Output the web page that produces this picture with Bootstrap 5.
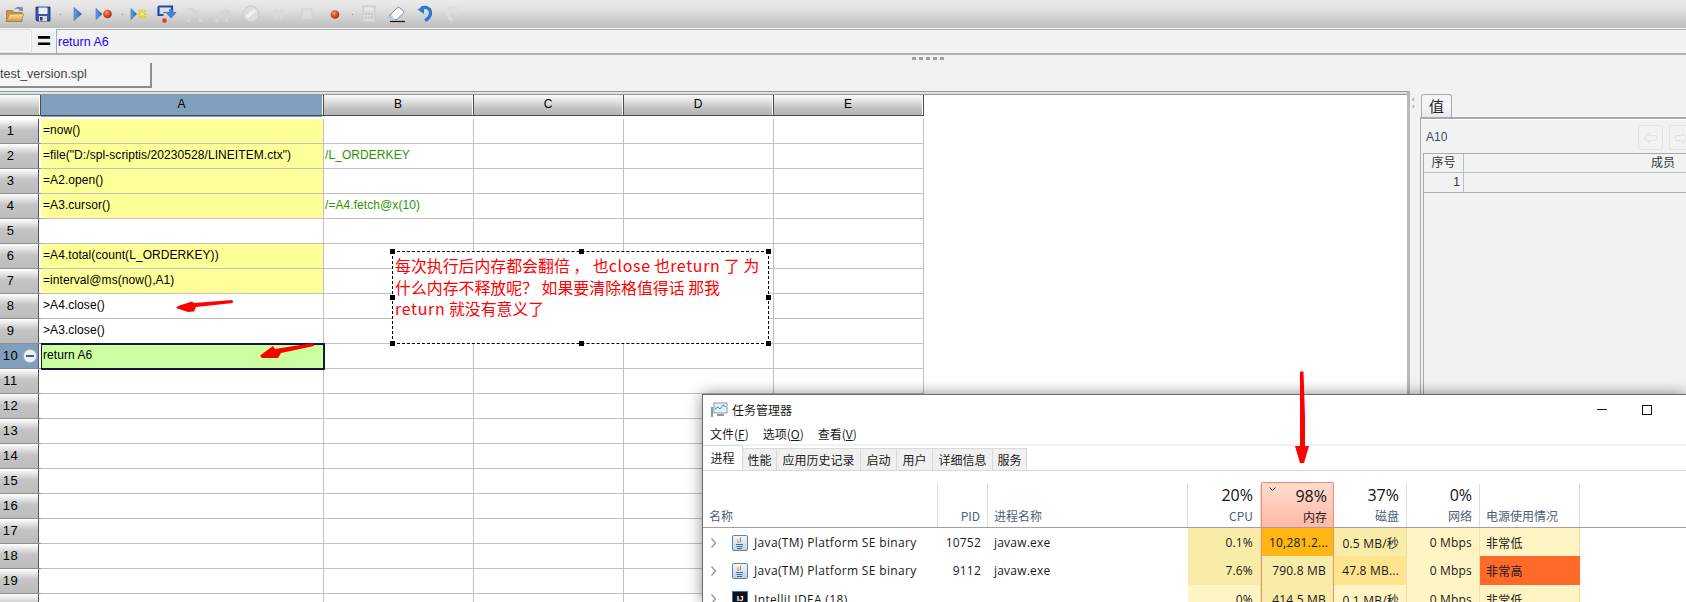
<!DOCTYPE html>
<html lang="zh-CN">
<head>
<meta charset="utf-8">
<title>test_version.spl</title>
<link rel="stylesheet" href="https://cdn.jsdelivr.net/npm/bootstrap@5.3.0/dist/css/bootstrap.min.css">
<style>
html,body{height:100%;overflow:hidden}
body{position:relative;background:#f1f3f2;font-family:"Liberation Sans","Noto Sans CJK SC",sans-serif;font-size:12px;color:#000;line-height:1.2}
.tbar{height:28px;padding-left:1px;background:linear-gradient(#ebebeb,#e2e2e2 30%,#bdbdbd)}
.tool{width:28px;height:22px}
.tool svg{width:20px;height:20px}
.tsep{width:6px;height:22px}
.tsep::after{content:"";width:1px;height:1px;background:#8a8a8a}
.fbar{height:27px;padding-top:1px;border-bottom:2px solid #aab2b4}
.namebox{width:32px;height:24px;border:1px solid #dcdedd;border-left:0;border-radius:0 3px 3px 0;background:#f1f3f2;box-shadow:inset -1px -1px #fff}
.eqsign{width:24px;font:700 24px/24px "Liberation Sans",sans-serif;text-align:center}
.finput{height:25px;padding-left:1px;border-left:1px solid #a8aeb0;border-top:1px solid #a8aeb0;color:#2a00ff;font-size:12.5px}
.tabzone{height:36px;position:relative}
.gripdots{height:8px;gap:3px;padding:2px 0 0 912px}
.gripdots i{width:4px;height:3px;background:#a0a0a0}
.ftab{width:152px;height:25px;background:#f4f5f4;border-right:2px solid #8c8c8c;border-bottom:2px solid #8c8c8c;color:#444;font-size:12.5px;white-space:nowrap}
.mainrow{height:511px}
.sheetwrap{width:1410px;flex:none;background:#fff;border-top:1px solid #959b9d;border-right:3px solid #b4babb;overflow:hidden}
.sheetwrap::before{content:"";display:block;height:3px;background:#dfe2e2;border-bottom:1px solid #8f9698}
.sheet{border-collapse:separate;border-spacing:0;table-layout:fixed;width:924px;margin:0;letter-spacing:.07px}
.sheet td,.sheet th{height:25px;padding:0 0 2px 2px;border-right:1px solid #c0c0c0;border-bottom:1px solid #c0c0c0;font-weight:400;white-space:nowrap;overflow:hidden;color:#000}
.sheet .colhead td,.sheet .colhead th{height:24px;padding:0 2px 3px 0;text-align:center;background:linear-gradient(#fbfbfb,#bdbdbd 70%,#b6b6b6) no-repeat 0 0/100% 21px;border-bottom:2px solid #fff;border-right:0;box-shadow:inset -2px 0 #fff;position:relative}
.sheet .colhead th::after{content:"";position:absolute;left:0;right:0;top:20px;height:1px;background:#4a4a4a}
.sheet .colhead th::before{content:"";position:absolute;right:0;top:0;height:21px;width:1px;background:#4a4a4a}
.sheet .colhead th.csel{background:#7f9fbc no-repeat 0 0/100% 21px}
.w-rh{width:41px}.w-a{width:283px}.w-c{width:150px}
.sheet .rh{padding:0 20px 0 0;text-align:center;font-size:13px;letter-spacing:.5px;background:linear-gradient(#fff,#c4c4c4 45%,#bcbcbc) no-repeat 0 0/38px 100%;border-right:0;border-bottom:1px solid #8e8e8e;box-shadow:inset -2px 0 #fff,inset -3px 0 #555;position:relative}
.sheet .rh.rsel{background:#7f9fbc no-repeat 0 0/38px 100%}
.foldbtn{position:absolute;right:5px;top:6px;width:12px;height:12px;border-radius:50%;background:#eef1f6;box-shadow:0 0 2px #fff}
.foldbtn::after{content:"";position:absolute;left:2px;right:2px;top:5px;height:2px;background:#3f5f8f}
.ycell{background:#ffff99}
.sheet .gcell{color:#2b9500;padding-left:1px}
.sheet .selcell{background:#ccffa0;outline:2px solid #17173f;outline-offset:-1px}
.notebox{position:absolute;left:392px;top:251px;width:377px;height:93px;padding:3px 2px;border:1px dashed #000;color:#f00;font:400 15.9px/21.5px "Noto Sans CJK SC",sans-serif;white-space:nowrap;background:#fff}
.latin{letter-spacing:.7px}
.hnd{position:absolute;width:5px;height:5px;background:#000}
.h-tl{left:-3px;top:-3px}.h-tc{left:186px;top:-3px}.h-tr{right:-3px;top:-3px}.h-ml{left:-3px;top:43px}.h-mr{right:-3px;top:43px}.h-bl{left:-3px;bottom:-3px}.h-bc{left:186px;bottom:-3px}.h-br{right:-3px;bottom:-3px}
.splitv{width:10px;flex:none;padding:5px 0 0 2px;color:#666;font-size:7px;line-height:7px}
.sidepanel{min-width:0;overflow:hidden}
.sidehead{height:26px;padding-top:3px;flex:none}
.vtab{width:31px;height:23px;margin-left:1px;border:1px solid #a5adb0;border-bottom:0;border-radius:3px 3px 0 0;background:linear-gradient(#f4f6f6,#f4f6f6 60%,#e4e8ea);font-size:15px;line-height:22px;text-align:center;color:#222;font-family:"Noto Sans CJK SC",sans-serif}
.sidebody{border-top:2px solid #a5adb0;border-left:1px solid #a5adb0;padding-top:6px;padding-left:2px;box-shadow:inset 0 1px #fff}
.a10row{height:25px;width:277px;margin-bottom:3px}
.a10txt{padding-left:3px;color:#3a4a5a;font-size:12px}
.navbtn{width:25px;height:25px;padding:0;margin-right:6px;border:1px solid #dfe3e3;border-radius:2px;background:#f1f3f2;color:#dcdfdf;font-size:14px;line-height:20px;flex:none}
.btn.navbtn:disabled{border-color:#dfe3e3;color:#d4d8d8;opacity:1}
.navgroup{margin-left:auto;flex:none}
.valframe{border-left:1px solid #a5adb0;height:300px}
.vhead{display:grid;grid-template-columns:40px 1fr;width:438px;border-top:1px solid #a5adb0;border-bottom:1px solid #b8bfc1;height:20px;color:#333;font-size:12px;line-height:19px;text-align:center}
.vrow{display:grid;grid-template-columns:40px 1fr;width:438px;border-bottom:1px solid #a5adb0;height:20px;line-height:19px;color:#333}
.vhead span:first-child,.vrow span:first-child{border-right:1px solid #b8bfc1}
.vrow span:first-child{text-align:right;padding-right:3px;font-size:12px}
.tmwin{position:absolute;left:702px;top:394px;right:0;bottom:0;background:#fff;border-left:1px solid #6a6a6a;border-top:1px solid #6a6a6a;box-shadow:0 0 14px rgba(0,0,0,.45);font-family:"Open Sans","Noto Sans CJK SC",sans-serif;color:#1a1a1a;overflow:hidden}
.tmtitle{height:30px;padding-left:7px;font-size:12px;gap:4px;font-family:"Noto Sans CJK SC",sans-serif}
.tmtitle svg{width:18px;height:18px}
.winmin{position:absolute;left:894px;top:14px;width:10px;height:1px;background:#111}
.winmax{position:absolute;left:939px;top:10px;width:10px;height:10px;border:1px solid #111}
.tmmenu{height:18px;padding-left:7px;gap:14px;font-size:12px;font-family:"Noto Sans CJK SC",sans-serif}
.tmmenu u{text-underline-offset:1px}
.tmtabs{height:27px;margin-top:1px;border-top:2px solid #f2f2f2;border-bottom:1px solid #d9d9d9;padding:0;flex-wrap:nowrap;font:12px "Noto Sans CJK SC",sans-serif}
.tmtab{height:22px;margin-top:2px;border:1px solid #d9d9d9;border-left:0;border-bottom:0;background:#f0f0f0;line-height:22px;text-align:center;color:#222}
.tmtab.active-t{height:25px;margin-top:-1px;background:#fff;line-height:23px}
.t40{width:40px}.t33{width:34px}.t84{width:84px}.t36{width:36px}.t60{width:60px}
.tmcols{display:grid;grid-template-columns:235px 50px 200px 73px 73px 73px 73px 100px 1fr}
.tmheadwrap{padding-top:13px;border-bottom:1px solid #a0a0a0;height:57px}
.hc{height:43px;border-right:1px solid #dcdcdc;padding:0 7px;text-align:right;position:relative}
.hc.noline{border-right:0}
.hc .pct{display:block;height:22px;font-size:16px;line-height:22px;color:#111;white-space:nowrap}
.hc .lab{display:block;font:12px/18px "Noto Sans CJK SC",sans-serif;color:#4c607a;white-space:nowrap;margin-top:1px}
.hc.la{text-align:left;padding-left:6px}
.hc.memh{background:linear-gradient(#ffdccf,#ffb9a6);border:1px solid #f58d6a;border-bottom:0;border-radius:2px 2px 0 0;margin-top:-2px;height:45px;padding:2px 6px 0}
.hc.memh .lab{color:#222}
.chev{position:absolute;left:7px;top:4px;width:7px;height:4px}
.tmrow{height:28.4px;font-size:12px;line-height:29px;white-space:nowrap}
.dc{padding:0 7px;text-align:right;overflow:hidden;font-size:12px;letter-spacing:.2px}
.dc.la{text-align:left;padding-left:6px}
.namec{padding-left:7px;gap:7px}
.namec .chv{width:8px;height:12px;margin-right:7px}
.namec .pic{width:16px;height:16px;flex:none;margin-right:-1px}
.namec span{letter-spacing:.34px}
.b1{background:#fff4c4}.b2{background:#f9eba8}.b3{background:#ffe38f}.b4{background:#fdb614}.b5{background:#ff6a29}
.memb{border-left:1px solid #f0906a;border-right:1px solid #f0906a}
.sepc{border-right:1px solid #f3dfa0}
.cjk{font-family:"Noto Sans CJK SC",sans-serif}
.overlay{position:absolute;left:0;top:0;width:1686px;height:602px;pointer-events:none}
.defs0{position:absolute;width:0;height:0}
</style>
</head>
<body>
<svg class="defs0" aria-hidden="true"><defs>
<radialGradient id="ball" cx=".4" cy=".35" r=".7"><stop offset="0" stop-color="#f7a07a"/><stop offset=".5" stop-color="#e0482a"/><stop offset="1" stop-color="#a82a18"/></radialGradient>
<linearGradient id="bluet" x1="0" x2="1"><stop offset="0" stop-color="#6aa6e8"/><stop offset="1" stop-color="#1f5fc0"/></linearGradient>
<linearGradient id="folder" x1="0" x2="0" y1="0" y2="1"><stop offset="0" stop-color="#f8e3a0"/><stop offset="1" stop-color="#d09a3a"/></linearGradient>
<linearGradient id="javabg" x1="0" x2="0" y1="0" y2="1"><stop offset="0" stop-color="#f4f8fc"/><stop offset="1" stop-color="#bcd2e8"/></linearGradient>
</defs></svg>

<div class="tbar d-flex align-items-center">
  <div class="tool d-flex align-items-center justify-content-center"><svg viewBox="0 0 20 20"><path d="M1.500 6.500h6l1.500 2h8v9h-15.500z" fill="#c89a48" stroke="#8a6a2a" stroke-width=".6"/><path d="M4.500 10h14.500l-3 7.500h-15z" fill="url(#folder)" stroke="#9a7a34" stroke-width=".6"/><path d="M9 6c1.500-3 5-4 7.500-2.500l1-1.500.5 5-4.800-.5 1.300-1.200c-1.800-1-4-.5-5.500.7z" fill="#6f8ea8"/></svg></div>
  <div class="tool d-flex align-items-center justify-content-center"><svg viewBox="0 0 20 20"><path d="M3 3h14v14h-13l-1-1z" fill="#3f52ad" stroke="#222c66" stroke-width=".8"/><rect x="5.500" y="3.500" width="9" height="6.500" fill="#e8ebf8"/><rect x="6" y="12" width="8" height="5" fill="#d5d5dc"/><rect x="7" y="13" width="2.500" height="3.500" fill="#333a66"/></svg></div>
  <div class="tsep d-flex align-items-center justify-content-center"></div>
  <div class="tool d-flex align-items-center justify-content-center"><svg viewBox="0 0 20 20"><path d="M7 3.500l7.500 6.500-7.500 6.500z" fill="url(#bluet)" stroke="#1d55a8" stroke-width=".5"/></svg></div>
  <div class="tool d-flex align-items-center justify-content-center"><svg viewBox="0 0 20 20"><path d="M1 4.500l6 5.500-6 5.500z" fill="url(#bluet)" stroke="#1d55a8" stroke-width=".5"/><circle cx="12.500" cy="10" r="4.300" fill="url(#ball)"/></svg></div>
  <div class="tsep d-flex align-items-center justify-content-center"></div>
  <div class="tool d-flex align-items-center justify-content-center"><svg viewBox="0 0 20 20"><path d="M2 4.500l5.500 5.500-5.500 5.500z" fill="url(#bluet)" stroke="#1d55a8" stroke-width=".5"/><g stroke="#f2c818" stroke-width="1.300"><path d="M9.500 6l7 8M16.500 6l-7 8M13 5v10M8.500 10h9"/></g><circle cx="13" cy="10" r="1.800" fill="#fbe880"/></svg></div>
  <div class="tool d-flex align-items-center justify-content-center"><svg viewBox="0 0 20 20"><path d="M1.500 2.500h13.500v5" fill="none" stroke="#1b4fa0" stroke-width="2.200"/><path d="M1.500 2.500v8.500h5" fill="none" stroke="#1b4fa0" stroke-width="2.200"/><path d="M6 8.500h6.500v-3h3.500v3h3l-5 5.500-5-5.500z" fill="#3d86da" stroke="#1b4fa0" stroke-width=".5"/><rect x="5.500" y="14.500" width="4" height="4" fill="#e03a20"/></svg></div>
  <div class="tool d-flex align-items-center justify-content-center"><svg viewBox="0 0 20 20" fill="#d4d5d5"><path d="M3 4h5l3.500 3.500v-2l5 5.500h-3l-3 3-3-3 1.500-1.500-3-3.500h-3z"/><rect x="2" y="15" width="3" height="3"/><rect x="14" y="15" width="3" height="3"/></svg></div>
  <div class="tool d-flex align-items-center justify-content-center"><svg viewBox="0 0 20 20" fill="#d4d5d5"><path d="M6 14c0-5 2-7 6-7v-3.500l5.500 5-5.500 5v-3.500c-2 0-3 1.500-3 4z"/><rect x="2" y="15" width="3" height="3"/><rect x="12" y="15" width="3" height="3"/></svg></div>
  <div class="tool d-flex align-items-center justify-content-center"><svg viewBox="0 0 20 20"><circle cx="10" cy="10" r="8" fill="#dcdddd" stroke="#c8c9c9"/><path d="M6 13l8-7" stroke="#f2f2f2" stroke-width="3"/></svg></div>
  <div class="tool d-flex align-items-center justify-content-center"><svg viewBox="0 0 20 20" fill="#d8d9d9"><rect x="6" y="5" width="3" height="10"/><rect x="11" y="5" width="3" height="10"/></svg></div>
  <div class="tool d-flex align-items-center justify-content-center"><svg viewBox="0 0 20 20"><rect x="5" y="5" width="10" height="10" fill="#dcdddd" stroke="#d0d1d1"/></svg></div>
  <div class="tool d-flex align-items-center justify-content-center"><svg viewBox="0 0 20 20"><circle cx="10" cy="10.500" r="4.300" fill="url(#ball)"/></svg></div>
  <div class="tsep d-flex align-items-center justify-content-center"></div>
  <div class="tool d-flex align-items-center justify-content-center"><svg viewBox="0 0 20 20"><rect x="4" y="2" width="12" height="16" fill="#dadbdb" stroke="#c8c9c9"/><rect x="5.500" y="3.500" width="9" height="3" fill="#e8e9e9"/><g fill="#c6c7c7"><rect x="6" y="9" width="2" height="2"/><rect x="9" y="9" width="2" height="2"/><rect x="12" y="9" width="2" height="2"/><rect x="6" y="12.500" width="2" height="2"/><rect x="9" y="12.500" width="2" height="2"/><rect x="12" y="12.500" width="2" height="2"/></g></svg></div>
  <div class="tool d-flex align-items-center justify-content-center"><svg viewBox="0 0 20 20"><path d="M2 12l8-8c1-1 2-1 3 0l3 2.500c1 1 1 2 0 3l-6 6h-4z" fill="#fff" stroke="#6f8ba8"/><path d="M2 12l3 4h3l-3.500-5.500z" fill="#b8cde4"/><path d="M3 17.500h15" stroke="#111" stroke-width="1.200"/></svg></div>
  <div class="tool d-flex align-items-center justify-content-center"><svg viewBox="0 0 20 20"><path d="M6 4.500c5-2.500 10 0 9.500 5-.3 3-2.500 5.500-5.500 7" fill="none" stroke="#2f77d0" stroke-width="3.200"/><path d="M2.500 5.500l6.500-3.500v8z" fill="#2f77d0"/></svg></div>
  <div class="tool d-flex align-items-center justify-content-center"><svg viewBox="0 0 20 20"><path d="M14 4.500c-5-2.500-10 0-9.500 5 .3 3 2.500 5.500 5.500 7" fill="none" stroke="#dcdddd" stroke-width="2.600"/><path d="M17.500 5.500l-6-3.500v8z" fill="#dcdddd"/></svg></div>
</div>

<div class="fbar d-flex">
  <div class="namebox flex-shrink-0"></div>
  <div class="eqsign flex-shrink-0">=</div>
  <div class="finput flex-grow-1 d-flex align-items-center">return A6</div>
</div>

<div class="tabzone">
  <div class="gripdots d-flex"><i></i><i></i><i></i><i></i><i></i></div>
  <div class="ftab d-flex align-items-center">test_version.spl</div>
</div>

<div class="mainrow d-flex">
  <div class="sheetwrap">
    <table class="sheet">
      <colgroup><col class="w-rh"><col class="w-a"><col class="w-c"><col class="w-c"><col class="w-c"><col class="w-c"></colgroup>
      <tr class="colhead"><th></th><th class="csel">A</th><th>B</th><th>C</th><th>D</th><th>E</th></tr>
      <tr><td class="rh">1</td><td class="ycell">=now()</td><td></td><td></td><td></td><td></td></tr>
      <tr><td class="rh">2</td><td class="ycell">=file("D:/spl-scriptis/20230528/LINEITEM.ctx")</td><td class="gcell">/L_ORDERKEY</td><td></td><td></td><td></td></tr>
      <tr><td class="rh">3</td><td class="ycell">=A2.open()</td><td></td><td></td><td></td><td></td></tr>
      <tr><td class="rh">4</td><td class="ycell">=A3.cursor()</td><td class="gcell">/=A4.fetch@x(10)</td><td></td><td></td><td></td></tr>
      <tr><td class="rh">5</td><td></td><td></td><td></td><td></td><td></td></tr>
      <tr><td class="rh">6</td><td class="ycell">=A4.total(count(L_ORDERKEY))</td><td></td><td></td><td></td><td></td></tr>
      <tr><td class="rh">7</td><td class="ycell">=interval@ms(now(),A1)</td><td></td><td></td><td></td><td></td></tr>
      <tr><td class="rh">8</td><td>&gt;A4.close()</td><td></td><td></td><td></td><td></td></tr>
      <tr><td class="rh">9</td><td>&gt;A3.close()</td><td></td><td></td><td></td><td></td></tr>
      <tr><td class="rh rsel">10<span class="foldbtn"></span></td><td class="selcell">return A6</td><td></td><td></td><td></td><td></td></tr>
      <tr><td class="rh">11</td><td></td><td></td><td></td><td></td><td></td></tr>
      <tr><td class="rh">12</td><td></td><td></td><td></td><td></td><td></td></tr>
      <tr><td class="rh">13</td><td></td><td></td><td></td><td></td><td></td></tr>
      <tr><td class="rh">14</td><td></td><td></td><td></td><td></td><td></td></tr>
      <tr><td class="rh">15</td><td></td><td></td><td></td><td></td><td></td></tr>
      <tr><td class="rh">16</td><td></td><td></td><td></td><td></td><td></td></tr>
      <tr><td class="rh">17</td><td></td><td></td><td></td><td></td><td></td></tr>
      <tr><td class="rh">18</td><td></td><td></td><td></td><td></td><td></td></tr>
      <tr><td class="rh">19</td><td></td><td></td><td></td><td></td><td></td></tr>
      <tr><td class="rh"></td><td></td><td></td><td></td><td></td><td></td></tr>
    </table>
  </div>
  <div class="splitv">‹<br>›</div>
  <div class="sidepanel flex-grow-1 d-flex flex-column">
    <div class="sidehead"><div class="vtab">值</div></div>
    <div class="sidebody flex-grow-1">
      <div class="a10row d-flex align-items-center">
        <span class="a10txt">A10</span>
        <div class="navgroup d-flex">
          <button type="button" class="btn navbtn" disabled>⇦</button>
          <button type="button" class="btn navbtn" disabled>⇨</button>
        </div>
      </div>
      <div class="valframe">
        <div class="vhead"><span>序号</span><span>成员</span></div>
        <div class="vrow"><span>1</span><span></span></div>
      </div>
    </div>
  </div>
</div>

<div class="notebox">
  <span class="hnd h-tl"></span><span class="hnd h-tc"></span><span class="hnd h-tr"></span><span class="hnd h-ml"></span><span class="hnd h-mr"></span><span class="hnd h-bl"></span><span class="hnd h-bc"></span><span class="hnd h-br"></span>
  每次执行后内存都会翻倍 ， 也<span class="latin">close</span> 也<span class="latin">return</span> 了 为<br>什么内存不释放呢？ 如果要清除格值得话 那我<br><span class="latin">return</span> 就没有意义了
</div>

<div class="tmwin">
  <div class="tmtitle d-flex align-items-center">
    <svg viewBox="0 0 18 18"><rect x="4" y="2" width="13" height="10" fill="#e8f0f6" stroke="#8a9aa8"/><path d="M5 8l3-2 2 2 3-4 3 2" fill="none" stroke="#3a8ac8"/><rect x="1" y="6" width="2" height="10" fill="#6fae7a"/><path d="M7 14h7" stroke="#8a9aa8" stroke-width="2"/></svg>
    <span>任务管理器</span>
  </div>
  <span class="winmin"></span><span class="winmax"></span>
  <div class="tmmenu d-flex align-items-center">
    <span>文件(<u>F</u>)</span><span>选项(<u>O</u>)</span><span>查看(<u>V</u>)</span>
  </div>
  <div class="tmtabs nav">
    <div class="tmtab active-t t40">进程</div><div class="tmtab t33">性能</div><div class="tmtab t84">应用历史记录</div><div class="tmtab t36">启动</div><div class="tmtab t36">用户</div><div class="tmtab t60">详细信息</div><div class="tmtab t33">服务</div>
  </div>
  <div class="tmheadwrap tmcols">
    <div class="hc la"><span class="pct"></span><span class="lab">名称</span></div>
    <div class="hc"><span class="pct"></span><span class="lab">PID</span></div>
    <div class="hc la"><span class="pct"></span><span class="lab">进程名称</span></div>
    <div class="hc"><span class="pct">20%</span><span class="lab">CPU</span></div>
    <div class="hc memh"><svg class="chev" viewBox="0 0 7 4"><path d="M.5.500l3 3 3-3" fill="none" stroke="#333"/></svg><span class="pct">98%</span><span class="lab">内存</span></div>
    <div class="hc"><span class="pct">37%</span><span class="lab">磁盘</span></div>
    <div class="hc"><span class="pct">0%</span><span class="lab">网络</span></div>
    <div class="hc la"><span class="pct"></span><span class="lab">电源使用情况</span></div>
    <div class="hc noline"></div>
  </div>
  <div class="tmcols tmrow">
    <div class="d-flex align-items-center namec"><svg class="chv" viewBox="0 0 8 12"><path d="M1.500 1.500l4 4.500-4 4.500" fill="none" stroke="#999" stroke-width="1.400"/></svg><svg class="pic" viewBox="0 0 16 16"><rect x=".5" y=".5" width="15" height="15" rx="1.500" fill="url(#javabg)" stroke="#6a7f96"/><path d="M9 2.500c-2 2 1 3-1 5M6 4.500c-1 1.500 1 2 0 3.500" fill="none" stroke="#d9701e"/><path d="M4 9.500h7M4.500 11.500h6M5 13.500h5" stroke="#3d6a96"/></svg><span>Java(TM) Platform SE binary</span></div>
    <div class="dc">10752</div><div class="dc la">javaw.exe</div>
    <div class="dc b2 sepc">0.1%</div><div class="dc b4 memb">10,281.2...</div><div class="dc b2 sepc">0.5 MB/<span class="cjk">秒</span></div><div class="dc b1 sepc">0 Mbps</div><div class="dc la b1 sepc cjk">非常低</div><div></div>
  </div>
  <div class="tmcols tmrow">
    <div class="d-flex align-items-center namec"><svg class="chv" viewBox="0 0 8 12"><path d="M1.500 1.500l4 4.500-4 4.500" fill="none" stroke="#999" stroke-width="1.400"/></svg><svg class="pic" viewBox="0 0 16 16"><rect x=".5" y=".5" width="15" height="15" rx="1.500" fill="url(#javabg)" stroke="#6a7f96"/><path d="M9 2.500c-2 2 1 3-1 5M6 4.500c-1 1.500 1 2 0 3.500" fill="none" stroke="#d9701e"/><path d="M4 9.500h7M4.500 11.500h6M5 13.500h5" stroke="#3d6a96"/></svg><span>Java(TM) Platform SE binary</span></div>
    <div class="dc">9112</div><div class="dc la">javaw.exe</div>
    <div class="dc b2 sepc">7.6%</div><div class="dc b2 memb">790.8 MB</div><div class="dc b3 sepc">47.8 MB...</div><div class="dc b1 sepc">0 Mbps</div><div class="dc la b5 cjk">非常高</div><div></div>
  </div>
  <div class="tmcols tmrow">
    <div class="d-flex align-items-center namec"><svg class="chv" viewBox="0 0 8 12"><path d="M1.500 1.500l4 4.500-4 4.500" fill="none" stroke="#999" stroke-width="1.400"/></svg><svg class="pic" viewBox="0 0 16 16"><rect x=".5" y=".5" width="15" height="15" fill="#111" stroke="#2a6fd0"/><text x="8" y="10" font-family="Liberation Sans" font-weight="700" font-size="8" fill="#fff" text-anchor="middle">IJ</text></svg><span>IntelliJ IDEA (18)</span></div>
    <div class="dc"></div><div class="dc la"></div>
    <div class="dc b1 sepc">0%</div><div class="dc b2 memb">414.5 MB</div><div class="dc b1 sepc">0.1 MB/<span class="cjk">秒</span></div><div class="dc b1 sepc">0 Mbps</div><div class="dc la b1 sepc cjk">非常低</div><div></div>
  </div>
</div>

<svg class="overlay" viewBox="0 0 1686 602" aria-hidden="true">
  <g fill="#f00">
    <path d="M232.500 300 L233 303 L196 307 L194 311.500 L188 312 L176 308 L178 306 L192 301.500 L194 303z"/>
    <path d="M313 343 L314 346 L281 353 L278 358 L262 358 L260 356 L262 354 L273 346 L275 349z"/>
    <path d="M1300 371.500 L1303.500 371.500 L1305 417 L1305 446 L1309 446 L1304 463 L1300 463 L1295 446 L1300 446z"/>
  </g>
</svg>
<script src="https://cdn.jsdelivr.net/npm/bootstrap@5.3.0/dist/js/bootstrap.bundle.min.js"></script>
</body>
</html>
